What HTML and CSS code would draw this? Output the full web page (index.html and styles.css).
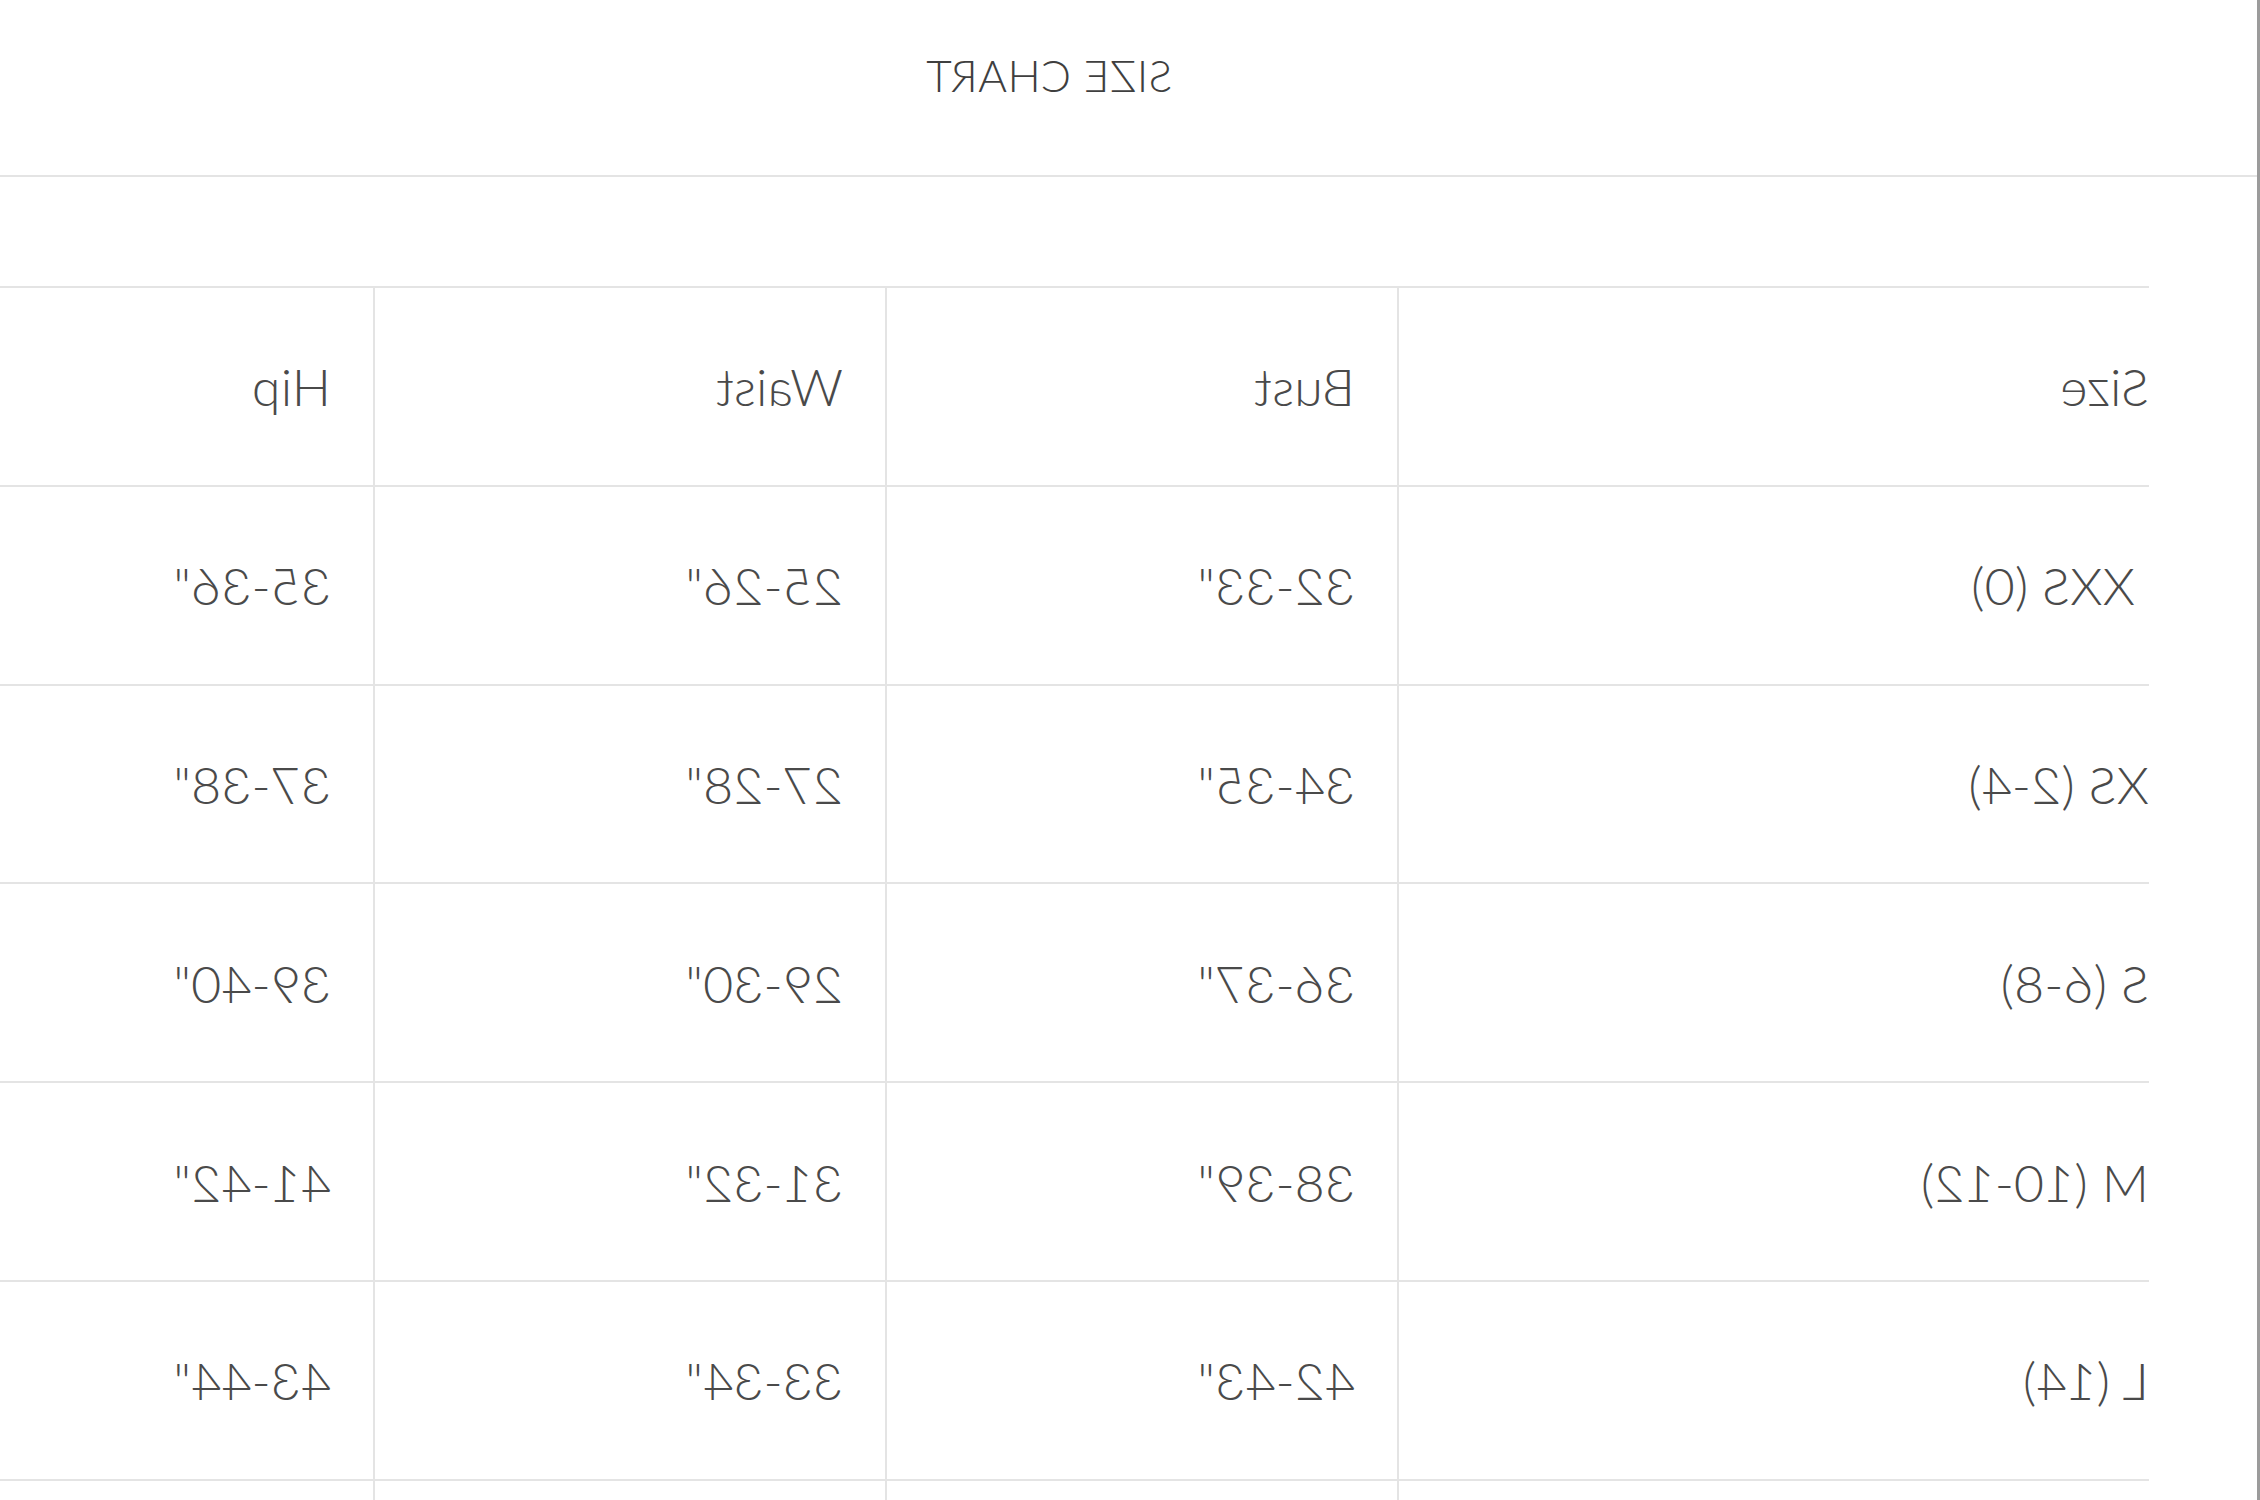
FILE: index.html
```html
<!DOCTYPE html>
<html lang="en">
<head>
<meta charset="utf-8">
<title>Size Chart</title>
<link rel="stylesheet" href="styles.css">
</head>
<body>
<div class="stage">
  <div class="modal">
    <header class="modal-head">
      <h2 class="modal-title">SIZE CHART</h2>
    </header>
    <div class="modal-body">
      <div class="chart">
        <div class="cell first">Size</div>
        <div class="cell">Bust</div>
        <div class="cell">Waist</div>
        <div class="cell">Hip</div>

        <div class="cell first">&nbsp;XXS (0)</div>
        <div class="cell">32-33"</div>
        <div class="cell">25-26"</div>
        <div class="cell">35-36"</div>

        <div class="cell first">XS (2-4)</div>
        <div class="cell">34-35"</div>
        <div class="cell">27-28"</div>
        <div class="cell">37-38"</div>

        <div class="cell first">S (6-8)</div>
        <div class="cell">36-37"</div>
        <div class="cell">29-30"</div>
        <div class="cell">39-40"</div>

        <div class="cell first">M (10-12)</div>
        <div class="cell">38-39"</div>
        <div class="cell">31-32"</div>
        <div class="cell">41-42"</div>

        <div class="cell first">L (14)</div>
        <div class="cell">42-43"</div>
        <div class="cell">33-34"</div>
        <div class="cell">43-44"</div>

        <div class="cell first"></div>
        <div class="cell"></div>
        <div class="cell"></div>
        <div class="cell"></div>
      </div>
    </div>
  </div>
</div>
</body>
</html>
```

FILE: styles.css
```css
html, body {
  margin: 0;
  padding: 0;
  background: #ffffff;
  overflow: hidden;
}

.stage {
  width: 2260px;
  height: 1500px;
  overflow: hidden;
  transform: scaleX(-1);
  font-family: "Lato", "Open Sans", "Liberation Sans", sans-serif;
  color: #4a4a4a;
  background: #ffffff;
}

.modal {
  width: 2416px;
  min-height: 1500px;
  border-left: 3px solid #9b9b9b;
  background: #ffffff;
}

.modal-head {
  height: 177px;
  box-sizing: border-box;
  padding-top: 49px;
  border-bottom: 2px solid #e4e4e4;
  text-align: center;
}

.modal-title {
  margin: 0;
  font-size: 44px;
  font-weight: 300;
  line-height: normal;
  color: #3f3f3f;
  letter-spacing: 0.5px;
}

.modal-body {
  padding: 109px 0 0 108px;
}

.chart {
  display: grid;
  grid-template-columns: 750px 512px 512px 512px;
  grid-auto-rows: 198.8px;
}

.cell {
  box-sizing: border-box;
  border-top: 2px solid #e4e4e4;
  border-left: 2px solid #e4e4e4;
  padding-left: 42px;
  display: flex;
  align-items: center;
  font-size: 52px;
  font-weight: 300;
  line-height: normal;
  white-space: pre;
}

.cell.first {
  border-left: none;
  padding-left: 0;
}
```
